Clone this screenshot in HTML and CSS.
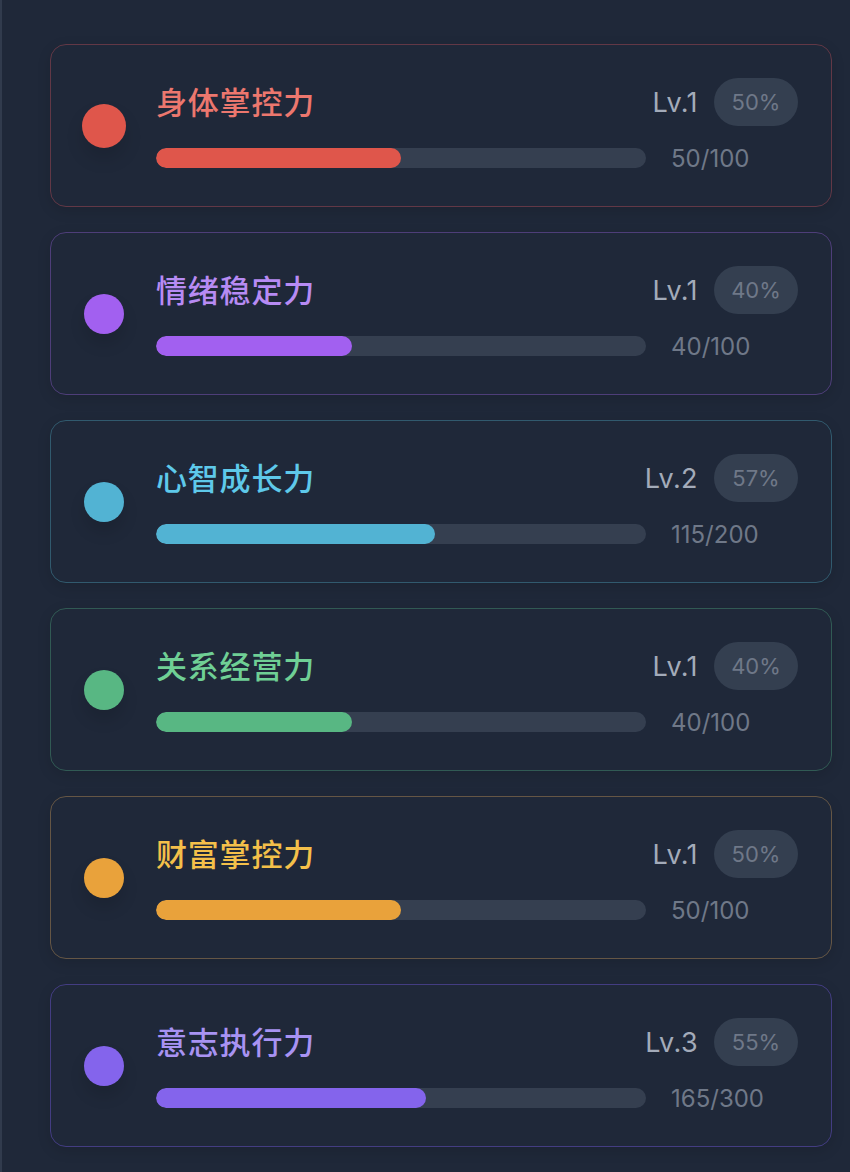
FILE: index.html
```html
<!DOCTYPE html>
<html lang="zh-CN">
<head>
<meta charset="utf-8">
<title>能力值</title>
<link rel="stylesheet" href="styles.css">
</head>
<body>
<div class="page">
  <div class="card red">
    <div class="dot dot-active"></div>
    <div class="main">
      <div class="row-top">
        <div class="title">身体掌控力</div>
        <div class="meta"><span class="lv">Lv.1</span><span class="pill">50%</span></div>
      </div>
      <div class="row-bottom">
        <div class="track"><div class="fill" style="width:50%"></div></div>
        <div class="count">50/100</div>
      </div>
    </div>
  </div>
  <div class="card purple">
    <div class="dot"></div>
    <div class="main">
      <div class="row-top">
        <div class="title">情绪稳定力</div>
        <div class="meta"><span class="lv">Lv.1</span><span class="pill">40%</span></div>
      </div>
      <div class="row-bottom">
        <div class="track"><div class="fill" style="width:40%"></div></div>
        <div class="count">40/100</div>
      </div>
    </div>
  </div>
  <div class="card cyan">
    <div class="dot"></div>
    <div class="main">
      <div class="row-top">
        <div class="title">心智成长力</div>
        <div class="meta"><span class="lv">Lv.2</span><span class="pill">57%</span></div>
      </div>
      <div class="row-bottom">
        <div class="track"><div class="fill" style="width:57%"></div></div>
        <div class="count">115/200</div>
      </div>
    </div>
  </div>
  <div class="card green">
    <div class="dot"></div>
    <div class="main">
      <div class="row-top">
        <div class="title">关系经营力</div>
        <div class="meta"><span class="lv">Lv.1</span><span class="pill">40%</span></div>
      </div>
      <div class="row-bottom">
        <div class="track"><div class="fill" style="width:40%"></div></div>
        <div class="count">40/100</div>
      </div>
    </div>
  </div>
  <div class="card orange">
    <div class="dot"></div>
    <div class="main">
      <div class="row-top">
        <div class="title">财富掌控力</div>
        <div class="meta"><span class="lv">Lv.1</span><span class="pill">50%</span></div>
      </div>
      <div class="row-bottom">
        <div class="track"><div class="fill" style="width:50%"></div></div>
        <div class="count">50/100</div>
      </div>
    </div>
  </div>
  <div class="card violet">
    <div class="dot"></div>
    <div class="main">
      <div class="row-top">
        <div class="title">意志执行力</div>
        <div class="meta"><span class="lv">Lv.3</span><span class="pill">55%</span></div>
      </div>
      <div class="row-bottom">
        <div class="track"><div class="fill" style="width:55%"></div></div>
        <div class="count">165/300</div>
      </div>
    </div>
  </div>
</div>
</body>
</html>
```
FILE: styles.css
```css
html, body {
  margin: 0;
  padding: 0;
  background: #1f2839;
}
body {
  font-family: "Inter", "Noto Sans CJK SC", sans-serif;
}
.page {
  min-height: 1172px;
  box-sizing: border-box;
  border-left: 2px solid #313b4d;
  padding: 44px 18px 0 48px;
  display: flex;
  flex-direction: column;
  gap: 25px;
}
.card {
  display: flex;
  align-items: center;
  gap: 32px;
  padding: 33px;
  border: 1px solid var(--border);
  border-radius: 16px;
  background: #1f2839;
  box-shadow: 0 4px 14px rgba(0, 0, 0, 0.12);
}
.dot {
  width: 40px;
  height: 40px;
  border-radius: 50%;
  flex: none;
  background: var(--c);
  box-shadow: 0 10px 16px rgba(0, 0, 0, 0.12);
}
.dot-active {
  transform: scale(1.1);
}
.main {
  flex: 1;
  display: flex;
  flex-direction: column;
  gap: 17px;
}
.row-top {
  display: flex;
  align-items: center;
  justify-content: space-between;
  height: 48px;
}
.title {
  font-family: "Noto Sans CJK SC", sans-serif;
  font-size: 31px;
  font-weight: 500;
  line-height: 40px;
  color: var(--t);
  letter-spacing: 0.8px;
  margin-top: -2px;
}
.meta {
  display: flex;
  align-items: center;
  gap: 16px;
}
.lv {
  font-size: 27px;
  font-weight: 400;
  color: #a3abb9;
  letter-spacing: 0.4px;
}
.pill {
  display: flex;
  align-items: center;
  justify-content: center;
  width: 84px;
  height: 48px;
  border-radius: 24px;
  background: #343f50;
  color: #6f7888;
  font-size: 22px;
}
.row-bottom {
  display: flex;
  align-items: center;
  gap: 25px;
  height: 30px;
}
.track {
  width: 490px;
  height: 20px;
  border-radius: 10px;
  background: #353f50;
  overflow: hidden;
  flex: none;
}
.fill {
  height: 100%;
  border-radius: 10px;
  background: var(--c);
}
.count {
  font-size: 24px;
  color: #6f7888;
}
.red    { --c: #df564b; --t: #ec776e; --border: #623846; }
.purple { --c: #a260f0; --t: #b78bf4; --border: #4e3e79; }
.cyan   { --c: #52b3d3; --t: #5ec9ea; --border: #315a6e; }
.green  { --c: #58b783; --t: #6fcf95; --border: #315a54; }
.orange { --c: #e9a23b; --t: #f4c04a; --border: #655645; }
.violet { --c: #8464ec; --t: #a893f3; --border: #433d82; }
```
